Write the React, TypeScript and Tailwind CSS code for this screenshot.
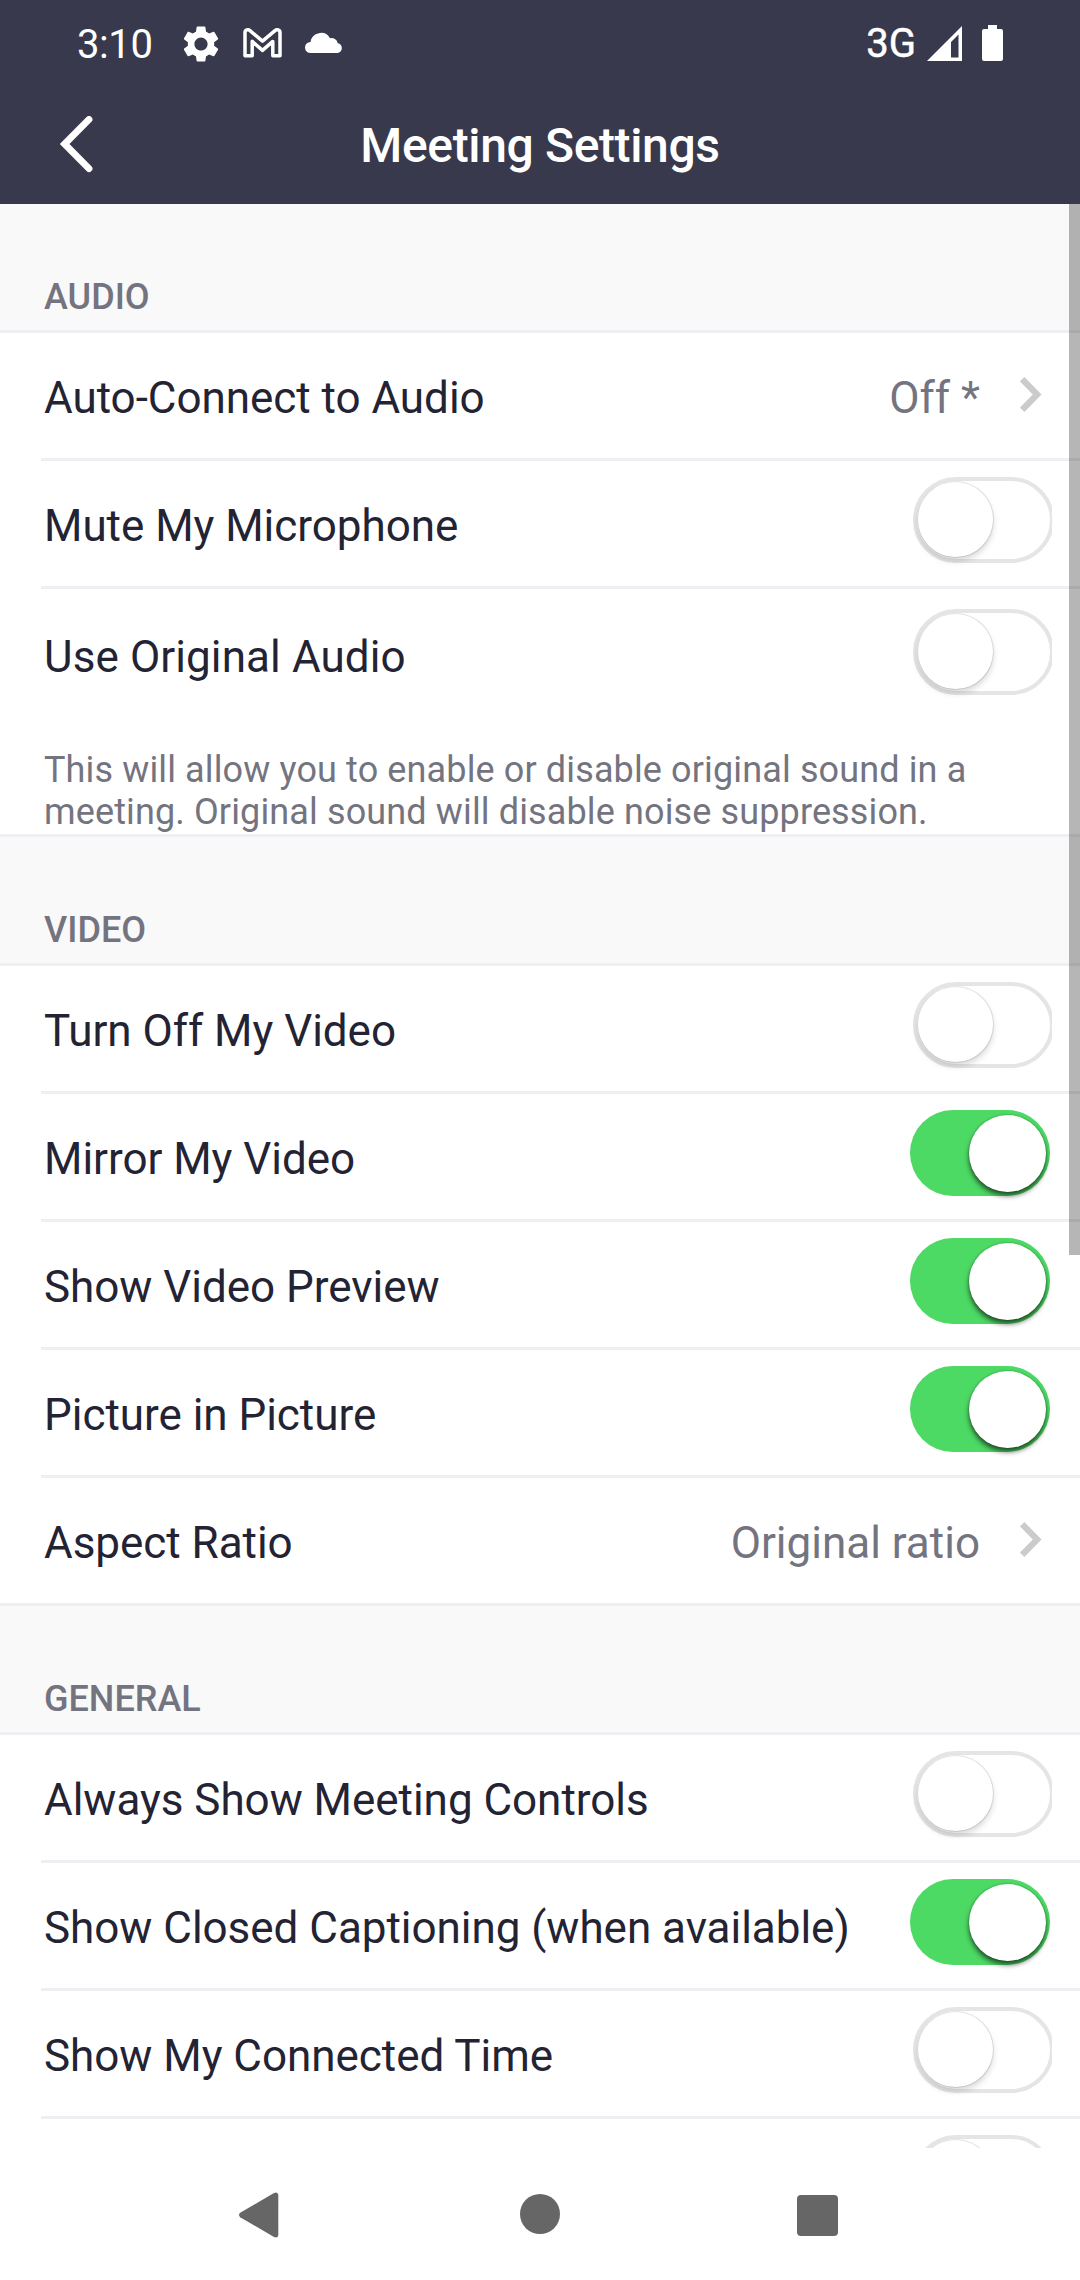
import React from "react";
import { MdSettings } from "react-icons/md";

type Item = {
  label: string;
  value?: string;
  on?: boolean;
  note?: string;
};

const sections: { title: string; items: Item[] }[] = [
  {
    title: "AUDIO",
    items: [
      { label: "Auto-Connect to Audio", value: "Off *" },
      { label: "Mute My Microphone", on: false },
      {
        label: "Use Original Audio",
        on: false,
        note: "This will allow you to enable or disable original sound in a meeting. Original sound will disable noise suppression.",
      },
    ],
  },
  {
    title: "VIDEO",
    items: [
      { label: "Turn Off My Video", on: false },
      { label: "Mirror My Video", on: true },
      { label: "Show Video Preview", on: true },
      { label: "Picture in Picture", on: true },
      { label: "Aspect Ratio", value: "Original ratio" },
    ],
  },
  {
    title: "GENERAL",
    items: [
      { label: "Always Show Meeting Controls", on: false },
      { label: "Show Closed Captioning (when available)", on: true },
      { label: "Show My Connected Time", on: false },
      { label: "", on: false },
    ],
  },
];

function Toggle({ on }: { on: boolean }) {
  if (on) {
    return (
      <span className="relative mr-[30px] block h-[86px] w-[140px] shrink-0 rounded-full bg-[#4cd964]">
        <span className="absolute right-1 top-[4.5px] size-[77px] rounded-full bg-white shadow-[0_4px_5px_rgba(0,0,0,0.6),0_0_2px_rgba(0,0,0,0.35)]" />
      </span>
    );
  }
  return (
    <span className="mr-[28px] block h-[94px] w-[139px] shrink-0 overflow-hidden">
      <span className="relative block h-[86px] w-[141px] rounded-full border-4 border-[#e5e5e5] bg-white">
        <span className="absolute left-[1px] top-[1px] size-[75px] rounded-full bg-white shadow-[0_4px_6px_rgba(0,0,0,0.16),0_0_0_1px_#e5e5e5]" />
      </span>
    </span>
  );
}

function Row({ item, last }: { item: Item; last: boolean }) {
  return (
    <>
      <div
        className={
          item.note
            ? "flex h-[157px] items-start pl-11 pt-1"
            : "flex h-[125px] items-start pl-11"
        }
      >
        <span
          className={
            item.note
              ? "mt-[3px] flex-1 whitespace-nowrap text-[44px] leading-[122px] tracking-[0.1px]"
              : "mt-[5px] flex-1 whitespace-nowrap text-[44px] leading-[120px] tracking-[-0.03px]"
          }
        >
          {item.label}
        </span>
        {item.value ? (
          <>
            <span className="mt-[5px] text-[44px] leading-[120px] text-[#747480]">{item.value}</span>
            <svg className="ml-10 mr-[38px] mt-11 h-[35px] w-[22px]" viewBox="0 0 22 35" fill="none">
              <path d="M2.2 2.2 L17.2 17.5 L2.2 32.8" stroke="#cbcbcb" strokeWidth="6.2" />
            </svg>
          </>
        ) : (
          <span className="mt-4">
            <Toggle on={!!item.on} />
          </span>
        )}
      </div>
      {item.note && (
        <p className="h-[88px] w-[1000px] pl-11 pt-[3px] text-[36px] leading-[42px] tracking-[0.13px] text-[#747480]">
          {item.note}
        </p>
      )}
      {!last && <div className="ml-[41px] h-[3px] bg-[#eeeef3]" />}
    </>
  );
}

function GmailIcon() {
  return (
    <svg className="h-[30px] w-[39px]" viewBox="0 0 39 30" fill="none" stroke="#fff" strokeWidth="3.5" strokeLinejoin="round">
      <path d="M2 27.8 V4.6 C2 1.8 5 1 7 2.6 L19.5 13.2 L32 2.6 C34 1 37 1.8 37 4.6 V27.8 H29.8 V13.4 L19.5 22.4 L9.2 13.4 V27.8 Z" />
    </svg>
  );
}

export default function App() {
  return (
    <div className="flex h-[2280px] w-[1080px] flex-col overflow-hidden bg-white font-['Roboto',sans-serif] text-[#232333]">
      <header className="h-[204px] shrink-0 bg-[#39394d] text-white">
        <div className="flex h-[88px] items-center pl-[77px] pr-[77px]">
          <span className="w-[102px] pt-[1px] text-[40px] leading-[88px] tracking-[-0.4px]">3:10</span>
          <MdSettings className="size-[44px]" />
          <span className="-mt-[3px] ml-5">
            <GmailIcon />
          </span>
          <svg className="-mt-[5px] ml-[23px] h-[22px] w-[38px]" viewBox="0 0 38 22" fill="#fff">
            <path d="M5.5 22 A5.5 5.5 0 0 1 5.5 11 A10.5 10.5 0 0 1 25 7.2 A6.5 6.5 0 0 1 32.8 12.2 A5 5 0 0 1 32.8 22 Z" />
          </svg>
          <span className="ml-auto text-[40px] leading-[84px] [-webkit-text-stroke:0.5px_white]">3G</span>
          <svg className="-mt-[2px] ml-[11px] h-[35px] w-[35px]" viewBox="0 0 35 35" fill="#fff" fillRule="evenodd">
            <path d="M0 35 L35 0 V35 Z M24 16 V31.5 H31.5 V8.5 Z" />
          </svg>
          <svg className="-mt-[2px] ml-5 h-[36px] w-[21px]" viewBox="0 0 21 36" fill="#fff">
            <path d="M6 0 H15 V4 H19 Q21 4 21 6 V34 Q21 36 19 36 H2 Q0 36 0 34 V6 Q0 4 2 4 H6 Z" />
          </svg>
        </div>
        <div className="grid h-[116px] grid-cols-[160px_1fr_160px] items-center">
          <svg className="ml-[58px] h-[60px] w-[38px]" viewBox="0 0 38 60" fill="none">
            <path d="M31 3.4 L6.6 28 L31 52.7" stroke="#fff" strokeWidth="6.8" strokeLinecap="round" strokeLinejoin="miter" />
          </svg>
          <h1 className="text-center text-[48px] font-medium leading-[116px] tracking-[-0.36px]">Meeting Settings</h1>
        </div>
      </header>

      <main className="relative h-[1944px] shrink-0 overflow-hidden">
        {sections.map((section, index) => (
          <section key={section.title}>
            {index > 0 && <div className="h-[3px] bg-[#eeeef3]" />}
            <h2 className="h-[126px] bg-[#f9f9f9] pl-11 pt-[72px] text-[36px] font-medium leading-[42px] text-[#747480]">
              {section.title}
            </h2>
            <div className="h-[3px] bg-[#eeeef3]" />
            {section.items.map((item, i) => (
              <Row key={i} item={item} last={i === section.items.length - 1} />
            ))}
          </section>
        ))}
        <div className="absolute right-0 top-0 h-[1051px] w-[11px] bg-black/[0.285]" />
      </main>

      <nav className="grid flex-1 grid-cols-[518px_44px_518px] items-center">
        <svg className="ml-[238px] mt-[1px] h-[46px] w-[41px]" viewBox="0 0 41 46" fill="#666">
          <path d="M2.2 20.8 L36 .9 Q40 -.6 40.3 3 V43 Q40 46.6 36 45.1 L2.2 25.2 Q-.2 23 2.2 20.8 Z" />
        </svg>
        <span className="ml-[2px] size-[40px] rounded-full bg-[#666]" />
        <span className="ml-[235px] mt-[2px] h-[41px] w-[41px] rounded-[4px] bg-[#666]" />
      </nav>
    </div>
  );
}
